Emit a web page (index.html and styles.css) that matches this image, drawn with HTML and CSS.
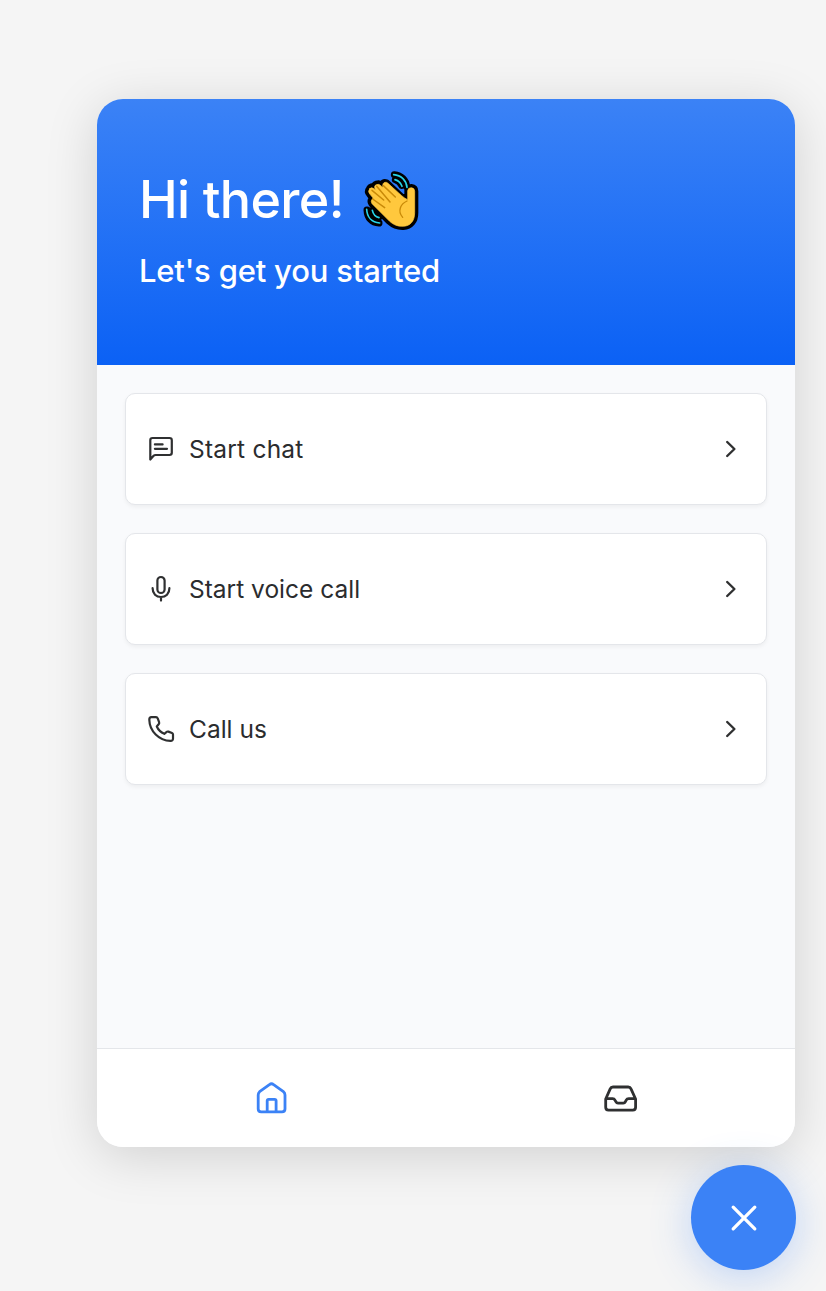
FILE: index.html
```html
<!DOCTYPE html>
<html lang="en">
<head>
<meta charset="utf-8">
<title>Chat widget</title>
<link rel="stylesheet" href="styles.css">
</head>
<body>
<main class="widget">
  <header class="hero">
    <h1 class="title"><span class="greeting">Hi there!</span>
      <svg class="wave" viewBox="36 30 174 186" aria-label="Waving hand">
        <g stroke-linecap="round" stroke-linejoin="round" fill="none">
          <path d="M133 44C154 46 168 61 170 80M136 59Q151 64 155 76M51 150C52 174 66 188 87 189M67 151Q71 169 86 173" stroke="#000" stroke-width="21"/>
          <path d="M59 86Q63 78 71 83L79 90L73 83Q74 72 86 72L95 77Q98 66 109 69L155 112L174 115V92Q175 83 184 83Q194 84 194 94V158C194 183 181 198 160 199C141 200 129 193 119 184L66 131Q61 123 67 117L70 115L60 103Q52 95 59 86Z" fill="#000" stroke="#000" stroke-width="22"/>
          <path d="M131 44C154 46 169 61 171 82M135 59Q151 64 156 79M50 148C51 172 66 187 89 189M67 151Q71 169 87 173" stroke="#27d4e8" stroke-width="5"/>
          <path d="M59 86Q64 80 72 86L78 91Q69 78 79 74Q87 69 96 80L99 82Q96 68 106 67Q110 66 114 70L155 107Q165 116 173 119V92Q174 83 184 83Q194 84 194 94V158C194 183 181 198 160 199C141 200 129 193 119 184L66 131Q61 123 67 117L70 115L60 103Q52 95 59 86Z" fill="#ffc83d" stroke="#ffc83d" stroke-width="2"/>
          <path d="M66 91L101 120M80 79L120 126M100 77L136 111M68 117L104 143" stroke="#c98a08" stroke-width="4.5"/>
          <path d="M171 123C151 132 142 154 158 172" stroke="#c98a08" stroke-width="4"/>
        </g>
      </svg>
    </h1>
    <p class="subtitle">Let's get you started</p>
  </header>
  <section class="actions">
    <button class="action">
      <svg class="icon" viewBox="147 435 28 28"><path d="M150.3 459.5V440.2Q150.3 438 152.5 438H169.5Q171.8 438 171.8 440.2V452.8Q171.8 455 169.5 455H155.6Q154.4 455 153.6 455.8L150.3 459.5ZM154.9 444.4H162.6M154.9 448.8H167"/></svg>
      <span class="label chat">Start chat</span>
      <svg class="icon chevron" viewBox="717 435 28 28"><path d="M727.2 442L734.4 449L727.2 456"/></svg>
    </button>
    <button class="action">
      <svg class="icon" viewBox="147 575 28 28"><rect x="157.4" y="577" width="7.2" height="16" rx="3.6"/><path d="M152.6 588.2C152.6 593.7 156.2 597 161 597S169.4 593.7 169.4 588.2M161 597V600.6"/></svg>
      <span class="label voice">Start voice call</span>
      <svg class="icon chevron" viewBox="717 435 28 28"><path d="M727.2 442L734.4 449L727.2 456"/></svg>
    </button>
    <button class="action">
      <svg class="icon" viewBox="147 715 28 28"><path d="M151.4 717.2H156Q157.2 717.2 157.7 718.4L159.1 722.2Q159.4 723.2 158.8 724L156.8 726.5Q159 731.5 164.3 733.8L166.7 731.9Q167.4 731.3 168.4 731.6L172 733Q173 733.4 173 734.6V738.4Q173 741 170.5 740.9C159 740.5 149.6 731.2 149.3 719.7Q149.3 717.2 151.4 717.2Z"/></svg>
      <span class="label phone">Call us</span>
      <svg class="icon chevron" viewBox="717 435 28 28"><path d="M727.2 442L734.4 449L727.2 456"/></svg>
    </button>
  </section>
  <nav class="tabs">
    <a class="tab active"><svg class="tab-icon" viewBox="252 1077.5 40 40"><path d="M258.2 1094.4Q258.2 1092.5 259.6 1091.2L269.4 1084.2Q271.5 1082.4 273.6 1084.2L283.4 1091.2Q285 1092.5 285 1094.4V1108.5Q285 1111.3 282 1111.3H261.2Q258.2 1111.3 258.2 1108.5ZM267.2 1111V1100.3Q267.2 1098.8 268.7 1098.8H274.6Q276.1 1098.8 276.1 1100.3V1111"/></svg></a>
    <a class="tab"><svg class="tab-icon" viewBox="601 1078 40 40"><path d="M605.7 1099L610.2 1088.9Q611 1087 613 1087H628.2Q630.2 1087 631 1088.9L635.6 1099V1107.3Q635.6 1110.1 632.8 1110.1H608.5Q605.7 1110.1 605.7 1107.3ZM606 1098.7H612.6Q614.2 1098.7 615 1100.2L616 1101.9Q616.6 1103.1 618 1103.1H623.3Q624.7 1103.1 625.3 1101.9L626.2 1100.2Q627 1098.7 628.7 1098.7H635.3"/></svg></a>
  </nav>
</main>
<button class="close" aria-label="Close"><svg class="close-icon" viewBox="0 0 28 28"><path d="M3.2 3.2L24.8 24.8M24.8 3.2L3.2 24.8"/></svg></button>
</body>
</html>
```
FILE: styles.css
```css
* { box-sizing: border-box; }
body {
  margin: 0;
  height: 1291px;
  padding: 99px 30px 0 97px;
  overflow: hidden;
  display: flex;
  flex-direction: column;
  background: #f5f5f5;
  color: #2b2c2e;
  font-family: Inter, "Liberation Sans", sans-serif;
}
button { font: inherit; color: inherit; }
.widget {
  width: 698px;
  height: 1048px;
  flex: none;
  display: flex;
  flex-direction: column;
  overflow: hidden;
  border-radius: 26px;
  background: #f9fafc;
  box-shadow: 0 9px 52px rgba(0, 0, 0, .15);
}
.hero {
  height: 266px;
  flex: none;
  padding: 70px 42px 0;
  color: #fff;
  background: linear-gradient(#3b82f6, #0b61f5);
}
.title {
  margin: 0;
  height: 64px;
  display: flex;
  align-items: center;
  gap: 18px;
  font-size: 52px;
  font-weight: 520;
  line-height: 62px;
}
.greeting { width: 205px; padding-bottom: 2px; white-space: nowrap; letter-spacing: -.65px; }
.wave { width: 58px; height: 62px; flex: none; }
.subtitle {
  margin: 17px 0 0;
  font-size: 31px;
  line-height: 42px;
  font-weight: 530;
  letter-spacing: -.2px;
}
.actions {
  flex: 1;
  padding: 28px;
  display: flex;
  flex-direction: column;
  gap: 28px;
}
.action {
  height: 112px;
  padding: 0 21px;
  display: flex;
  align-items: center;
  border: 1px solid #e4e6ea;
  border-radius: 10px;
  background: #fff;
  box-shadow: 0 2px 4px rgba(0, 0, 0, .05);
}
.icon { width: 28px; height: 28px; flex: none; }
.icon, .tab-icon, .close-icon {
  fill: none;
  stroke: #2f3031;
  stroke-width: 2.2;
  stroke-linecap: round;
  stroke-linejoin: round;
}
.label {
  margin-left: 14px;
  font-size: 24.5px;
  line-height: 35px;
  font-weight: 440;
}
.chat { letter-spacing: .22px; }
.voice { letter-spacing: 0; }
.phone { letter-spacing: 0; }
.chevron { margin-left: auto; stroke-width: 2.4; }
.tabs {
  height: 99px;
  flex: none;
  display: grid;
  grid-template-columns: 1fr 1fr;
  border-top: 1px solid #e4e6ea;
  background: #fff;
}
.tab { display: flex; align-items: center; justify-content: center; }
.tab-icon { width: 40px; height: 40px; stroke-width: 2.8; }
.active .tab-icon { stroke: #3b82f6; }
.close {
  width: 105px;
  height: 105px;
  margin: 18px 0 0 auto;
  padding: 0;
  flex: none;
  display: grid;
  place-items: center;
  border: 0;
  border-radius: 50%;
  background: #3b82f6;
  box-shadow: 0 7px 42px rgba(59, 130, 246, .3);
}
.close-icon { width: 28px; height: 28px; stroke: #fff; stroke-width: 3.3; }
```
